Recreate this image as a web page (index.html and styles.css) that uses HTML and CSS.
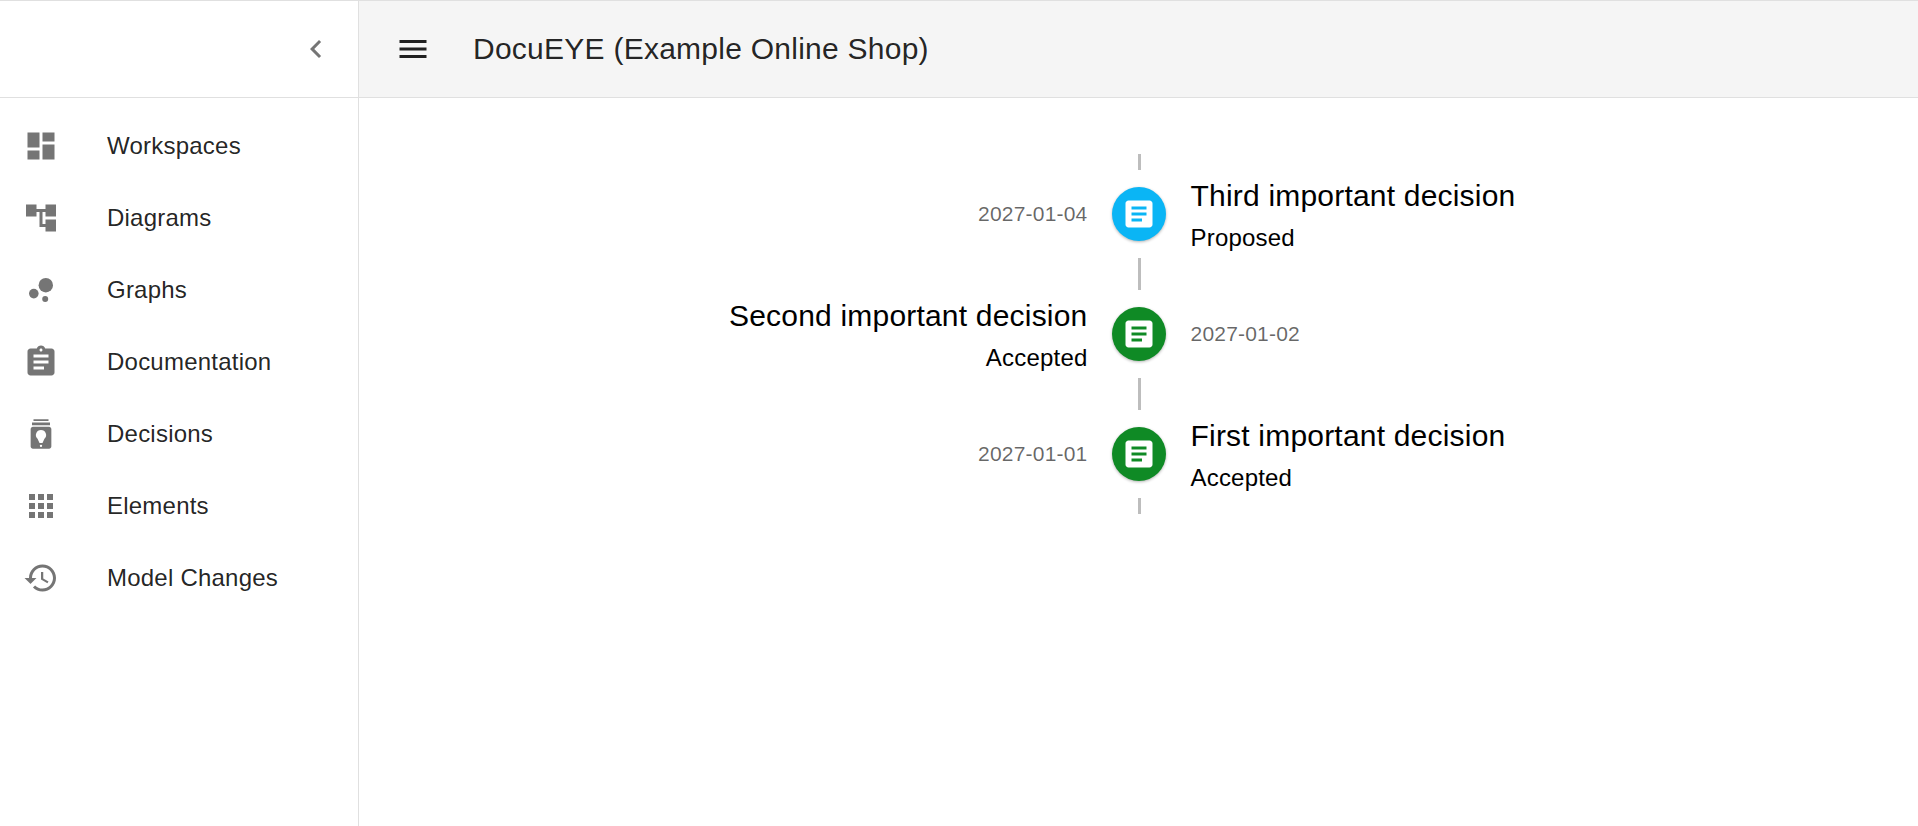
FILE: index.html
```html
<!DOCTYPE html>
<html lang="en">
<head>
<meta charset="utf-8">
<title>DocuEYE (Example Online Shop)</title>
<link rel="stylesheet" href="styles.css">
</head>
<body>
<div class="app">
  <aside class="sidebar">
    <div class="side-head">
      <svg class="chev" viewBox="0 0 24 24"><path d="M15.41 7.41 14 6l-6 6 6 6 1.41-1.41L10.83 12z"/></svg>
    </div>
    <nav class="nav">
      <a class="nav-item"><svg class="ico" viewBox="0 0 24 24"><path d="M3 13h8V3H3v10zm0 8h8v-6H3v6zm10 0h8V11h-8v10zm0-18v6h8V3h-8z"/></svg><span>Workspaces</span></a>
      <a class="nav-item"><svg class="ico" viewBox="0 0 24 24"><path d="M22 11V3h-7v3H9V3H2v8h7V8h2v10h4v3h7v-8h-7v3h-2V8h2v3z"/></svg><span>Diagrams</span></a>
      <a class="nav-item"><svg class="ico" viewBox="0 0 24 24"><circle cx="7.2" cy="14.4" r="3.2"/><circle cx="14.8" cy="18" r="2"/><circle cx="15.2" cy="8.8" r="4.8"/></svg><span>Graphs</span></a>
      <a class="nav-item"><svg class="ico" viewBox="0 0 24 24"><path d="M19 3h-4.18C14.4 1.84 13.3 1 12 1c-1.3 0-2.4.84-2.82 2H5c-1.1 0-2 .9-2 2v14c0 1.1.9 2 2 2h14c1.1 0 2-.9 2-2V5c0-1.1-.9-2-2-2zm-7 0c.55 0 1 .45 1 1s-.45 1-1 1-1-.45-1-1 .45-1 1-1zm2 14H7v-2h7v2zm3-4H7v-2h10v2zm0-4H7V7h10v2z"/></svg><span>Documentation</span></a>
      <a class="nav-item"><svg class="ico" viewBox="0 0 24 24"><path d="M7 2.200h10v1.100H7zM6 4.400h12v1.800H6z"/><path fill-rule="evenodd" d="M6.600 7.200h10.800c.8 0 1.500.7 1.500 1.500v11.700c0 .8-.7 1.500-1.500 1.500H6.600c-.8 0-1.500-.7-1.500-1.500V8.700c0-.8.7-1.500 1.500-1.500zM12 9.300a3.400 3.400 0 0 0-2.300 5.900L11 18h2l1.300-2.800A3.400 3.400 0 0 0 12 9.300zM12 19.100a.8.8 0 1 0 0 1.600.8.8 0 0 0 0-1.600z"/></svg><span>Decisions</span></a>
      <a class="nav-item"><svg class="ico" viewBox="0 0 24 24"><path d="M4 8h4V4H4v4zm6 12h4v-4h-4v4zm-6 0h4v-4H4v4zm0-6h4v-4H4v4zm6 0h4v-4h-4v4zm6-10v4h4V4h-4zm-6 4h4V4h-4v4zm6 6h4v-4h-4v4zm0 6h4v-4h-4v4z"/></svg><span>Elements</span></a>
      <a class="nav-item"><svg class="ico" viewBox="0 0 24 24"><path d="M13 3c-4.970 0-9 4.030-9 9H1l3.890 3.890.07.140L9 12H6c0-3.870 3.130-7 7-7s7 3.130 7 7-3.130 7-7 7c-1.930 0-3.680-.79-4.940-2.060l-1.420 1.420C8.270 19.990 10.510 21 13 21c4.970 0 9-4.030 9-9s-4.030-9-9-9zm-1 5v5l4.280 2.540.72-1.210-3.500-2.080V8H12z"/></svg><span>Model Changes</span></a>
    </nav>
  </aside>
  <div class="main">
    <header class="topbar">
      <svg class="menu" viewBox="0 0 24 24"><path d="M3 18h18v-2H3v2zm0-5h18v-2H3v2zm0-7v2h18V6H3z"/></svg>
      <h1 class="title">DocuEYE (Example Online Shop)</h1>
    </header>
    <section class="timeline">
      <div class="tl-item">
        <div class="side left"><span class="date">2027-01-04</span></div>
        <div class="sep"><i class="conn"></i><div class="dot blue"><svg class="doc" viewBox="0 0 24 24"><path d="M19 3H5c-1.100 0-2 .9-2 2v14c0 1.100.9 2 2 2h14c1.100 0 2-.9 2-2V5c0-1.100-.9-2-2-2zm-5 14H7v-2h7v2zm3-4H7v-2h10v2zm0-4H7V7h10v2z"/></svg></div><i class="conn"></i></div>
        <div class="side right"><div class="name">Third important decision</div><div class="status">Proposed</div></div>
      </div>
      <div class="tl-item">
        <div class="side left"><div class="name">Second important decision</div><div class="status">Accepted</div></div>
        <div class="sep"><i class="conn"></i><div class="dot green"><svg class="doc" viewBox="0 0 24 24"><path d="M19 3H5c-1.100 0-2 .9-2 2v14c0 1.100.9 2 2 2h14c1.100 0 2-.9 2-2V5c0-1.100-.9-2-2-2zm-5 14H7v-2h7v2zm3-4H7v-2h10v2zm0-4H7V7h10v2z"/></svg></div><i class="conn"></i></div>
        <div class="side right"><span class="date">2027-01-02</span></div>
      </div>
      <div class="tl-item">
        <div class="side left"><span class="date">2027-01-01</span></div>
        <div class="sep"><i class="conn"></i><div class="dot green"><svg class="doc" viewBox="0 0 24 24"><path d="M19 3H5c-1.100 0-2 .9-2 2v14c0 1.100.9 2 2 2h14c1.100 0 2-.9 2-2V5c0-1.100-.9-2-2-2zm-5 14H7v-2h7v2zm3-4H7v-2h10v2zm0-4H7V7h10v2z"/></svg></div><i class="conn"></i></div>
        <div class="side right"><div class="name">First important decision</div><div class="status">Accepted</div></div>
      </div>
    </section>
  </div>
</div>
</body>
</html>
```
FILE: styles.css
```css
* { box-sizing: border-box; }
html, body { margin: 0; height: 100%; }
body { font-family: "Liberation Sans", Arial, sans-serif; color: #000; background: #fff; overflow: hidden; }
.app { display: flex; height: 826px; border-top: 1px solid #e0e0e0; }
.sidebar { width: 359px; flex: none; border-right: 1px solid #e0e0e0; }
.side-head { height: 97px; border-bottom: 1px solid #e0e0e0; display: flex; align-items: center; justify-content: flex-end; padding-right: 24px; }
.chev { width: 36px; height: 36px; fill: #757575; }
.nav { padding-top: 12px; }
.nav-item { height: 72px; display: flex; align-items: center; padding-left: 23px; font-size: 24px; color: rgba(0,0,0,.87); letter-spacing: .225px; }
.ico { width: 36px; height: 36px; fill: #757575; flex: none; margin-right: 48px; }
.main { flex: 1; display: flex; flex-direction: column; min-width: 0; }
.topbar { height: 97px; flex: none; background: #f5f5f5; border-bottom: 1px solid #e0e0e0; display: flex; align-items: center; padding-left: 36px; }
.menu { width: 36px; height: 36px; fill: rgba(0,0,0,.87); flex: none; margin-right: 42px; }
.title { margin: 0; font-size: 30px; font-weight: 400; color: rgba(0,0,0,.87); letter-spacing: .25px; }
.timeline { padding-top: 56px; display: flex; flex-direction: column; }
.tl-item { display: grid; grid-template-columns: minmax(0, 1fr) 54px minmax(0, 1fr); height: 120px; }
.side { min-width: 0; display: flex; flex-direction: column; justify-content: center; }
.left { align-items: flex-end; padding-right: 24px; text-align: right; }
.right { align-items: flex-start; padding-left: 25px; }
.sep { display: flex; flex-direction: column; align-items: center; }
.conn { width: 3px; flex: 1; margin-left: 2px; background: #bdbdbd; }
.dot { width: 54px; height: 54px; margin: 17px 0; border-radius: 50%; display: flex; align-items: center; justify-content: center; box-shadow: 0 1px 3px rgba(0,0,0,.3); flex: none; }
.blue { background: #0ab5f5; }
.green { background: #0f8a25; }
.doc { width: 36px; height: 36px; fill: #fff; }
.date { font-size: 21px; color: rgba(0,0,0,.6); letter-spacing: .2px; }
.name { font-size: 30px; line-height: 42px; letter-spacing: .2px; margin-top: 4px; }
.status { font-size: 24px; line-height: 41px; letter-spacing: .2px; }
```
